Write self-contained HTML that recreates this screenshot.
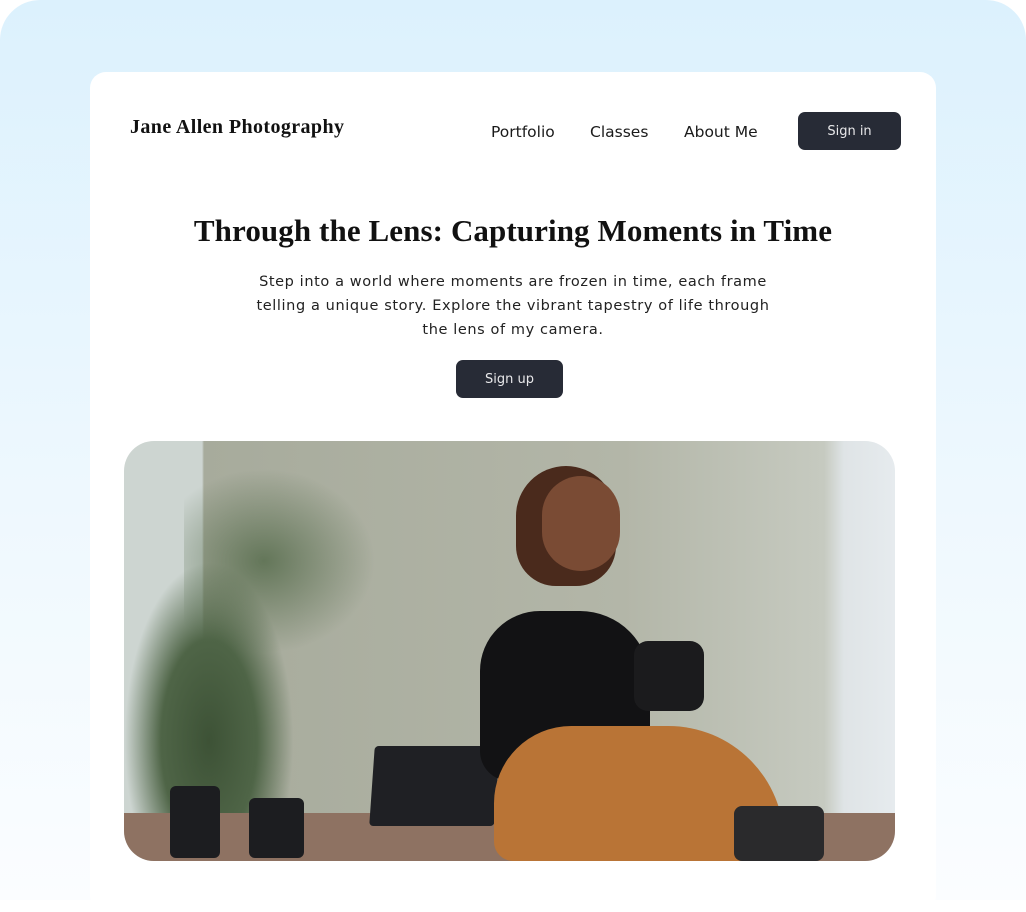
<!DOCTYPE html>
<html><head><meta charset="utf-8"><style>
*{margin:0;padding:0;box-sizing:border-box}
html,body{width:1026px;height:900px;overflow:hidden;background:#fff}
.outer{position:absolute;left:0;top:0;width:1026px;height:900px;border-radius:40px 40px 0 0;background:linear-gradient(#dcf1fd 0%,#eef8fe 55%,#fbfdff 100%)}
.card{position:absolute;left:90px;top:72px;width:846px;height:840px;background:#fff;border-radius:16px}
.logo{position:absolute;left:130px;top:116px;font:bold 20px "Liberation Serif",serif;color:#111;letter-spacing:0.4px}
.nav{position:absolute;top:123px;font:15.5px "DejaVu Sans","Liberation Sans",sans-serif;color:#1a1a1a}
.btn{position:absolute;background:#272b36;color:#e8e8ea;border-radius:7px;font:13px "DejaVu Sans",sans-serif;display:flex;align-items:center;justify-content:center}
h1{position:absolute;left:90px;width:846px;top:213px;text-align:center;font:bold 31px "Liberation Serif",serif;color:#111;letter-spacing:0.1px}
p{position:absolute;left:150px;width:726px;top:270px;text-align:center;font:14.5px/24px "DejaVu Sans",sans-serif;color:#222;white-space:nowrap;letter-spacing:0.6px}
.photo{position:absolute;left:124px;top:441px;width:771px;height:420px;border-radius:30px;overflow:hidden;background:linear-gradient(90deg,#cdd5d1 0,#cdd5d1 78px,#a7ab9c 80px,#b3b6a8 500px,#c6cac0 700px,#dfe4e6 720px,#e6ebee 771px)}
.photo div{position:absolute}
</style></head><body>
<div class="outer"></div>
<div class="card"></div>
<div class="logo">Jane Allen Photography</div>
<div class="nav" style="left:491px">Portfolio</div>
<div class="nav" style="left:590px">Classes</div>
<div class="nav" style="left:684px">About Me</div>
<div class="btn" style="left:798px;top:112px;width:103px;height:38px">Sign in</div>
<h1>Through the Lens: Capturing Moments in Time</h1>
<p>Step into a world where moments are frozen in time, each frame<br>telling a unique story. Explore the vibrant tapestry of life through<br>the lens of my camera.</p>
<div class="btn" style="left:456px;top:360px;width:107px;height:38px">Sign up</div>
<div class="photo">
 <div style="left:0;top:120px;width:170px;height:300px;background:radial-gradient(ellipse at 50% 60%,#3d5236 0,#4f6547 40%,rgba(160,165,150,0) 70%)"></div>
 <div style="left:60px;top:20px;width:200px;height:200px;background:radial-gradient(ellipse at 40% 50%,rgba(70,95,60,.7) 0,rgba(170,175,160,0) 65%)"></div>
 <div style="left:0;top:372px;width:771px;height:48px;background:#8e7262"></div>
 <div style="left:248px;top:305px;width:125px;height:80px;background:#1f2024;border-radius:4px;transform:skewX(-4deg)"></div>
 <div style="left:46px;top:345px;width:50px;height:72px;background:#1c1d20;border-radius:6px"></div>
 <div style="left:125px;top:357px;width:55px;height:60px;background:#1c1d20;border-radius:6px"></div>
 <div style="left:356px;top:170px;width:170px;height:170px;background:#121214;border-radius:60px 70px 30px 30px"></div>
 <div style="left:392px;top:25px;width:100px;height:120px;background:#4a2a1c;border-radius:50px 50px 40px 40px"></div>
 <div style="left:418px;top:35px;width:78px;height:95px;background:#7a4b34;border-radius:40px"></div>
 <div style="left:370px;top:285px;width:290px;height:135px;background:#b97436;border-radius:80px 120px 20px 20px"></div>
 <div style="left:510px;top:200px;width:70px;height:70px;background:#1b1b1d;border-radius:14px"></div>
 <div style="left:610px;top:365px;width:90px;height:55px;background:#2a2a2c;border-radius:8px"></div>
</div>
</body></html>
